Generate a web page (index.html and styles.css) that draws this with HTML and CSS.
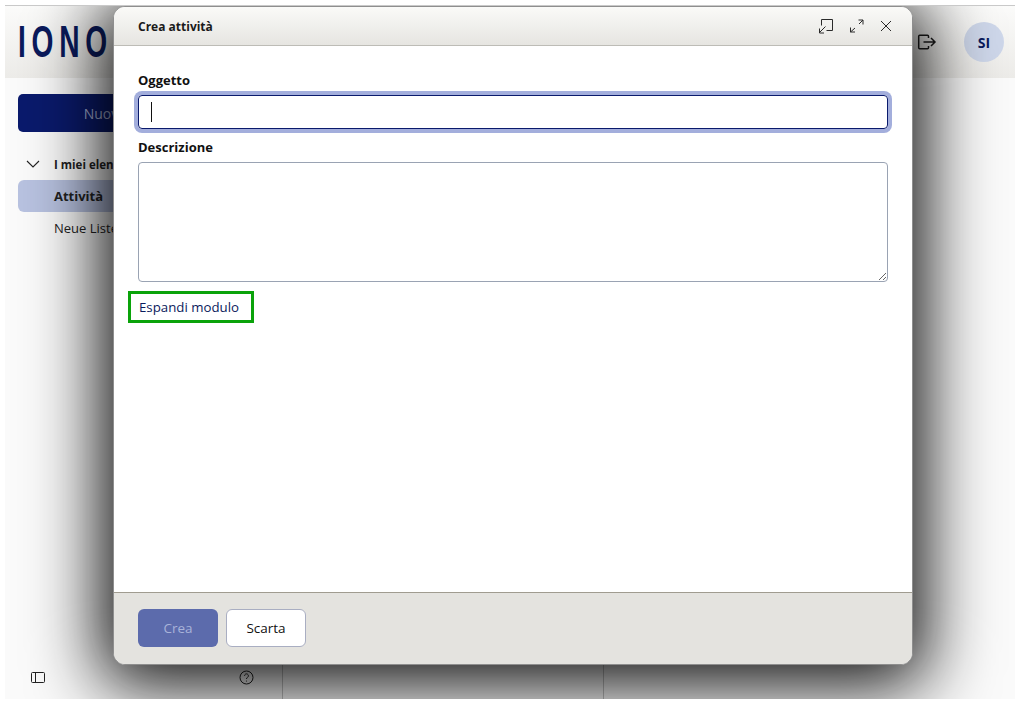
FILE: index.html
```html
<!DOCTYPE html>
<html lang="it">
<head>
<meta charset="utf-8">
<title>Crea attività</title>
<link rel="stylesheet" href="styles.css">
</head>
<body>
<div class="app">
  <header class="topbar">
    <div class="logo"><span class="logo-text">IONO</span></div>
    <div class="top-actions">
      <svg class="icon-logout" width="20" height="20" viewBox="0 0 20 20" fill="none" stroke="#1c1c1c" stroke-width="1.500"><path d="M11.500 6V4.200a1 1 0 0 0-1-1H2.700a1 1 0 0 0-1 1v11.600a1 1 0 0 0 1 1h7.800a1 1 0 0 0 1-1V14"/><path d="M6.500 10h11.500M14 6l4 4-4 4"/></svg>
      <div class="avatar">SI</div>
    </div>
  </header>
  <div class="workspace">
    <aside class="sidebar">
      <div class="side-top">
        <button class="new-btn">Nuova attività</button>
        <div class="group"><svg class="chev" width="14" height="8" viewBox="0 0 14 8" fill="none" stroke="#222" stroke-width="1.100"><path d="M1 1l6 6 6-6"/></svg><span>I miei elenchi</span></div>
        <div class="item item-on">Attività</div>
        <div class="item">Neue Liste</div>
      </div>
      <div class="side-foot">
        <svg width="16" height="13" viewBox="0 0 16 13" fill="none" stroke="#222" stroke-width="1"><rect x="1.500" y="1.500" width="13" height="10" rx="1"/><path d="M5.500 1.500v10"/></svg>
        <svg width="15" height="15" viewBox="0 0 15 15" fill="none" stroke="#222" stroke-width="1"><circle cx="7.500" cy="7.500" r="6.500"/><path d="M5.600 5.800a1.900 1.900 0 1 1 2.900 1.600c-.7.400-1 .8-1 1.600"/><circle cx="7.500" cy="11" r=".6" fill="#222" stroke="none"/></svg>
      </div>
    </aside>
    <section class="list-col"></section>
    <section class="detail-col"></section>
  </div>

  <div class="modal">
    <div class="modal-head">
      <h1 class="modal-title">Crea attività</h1>
      <div class="modal-tools">
        <svg width="16" height="16" viewBox="0 0 16 16" fill="none" stroke="#2a2a2a" stroke-width="1"><path d="M3.500 7.500V1.500h11v11h-6"/><path d="M1 15l6.500-6.500M1.500 10.500V15H6"/></svg>
        <svg width="16" height="16" viewBox="0 0 16 16" fill="none" stroke="#2a2a2a" stroke-width="1"><path d="M9.500 2h4.500v4.500M14 2L10 6M6 14H1.500V9.500M1.500 14L6 10"/></svg>
        <svg width="12" height="12" viewBox="0 0 12 12" fill="none" stroke="#2a2a2a" stroke-width="1"><path d="M1 1l10 10M11 1L1 11"/></svg>
      </div>
    </div>
    <div class="modal-body">
      <label class="field-label first">Oggetto</label>
      <div class="input-focus"><span class="caret"></span></div>
      <label class="field-label second">Descrizione</label>
      <textarea class="area"></textarea>
      <a class="expand">Espandi modulo</a>
    </div>
    <div class="modal-foot">
      <button class="btn btn-primary">Crea</button>
      <button class="btn btn-plain">Scarta</button>
    </div>
  </div>
</div>
</body>
</html>
```
FILE: styles.css
```css
html, body {
  margin: 0;
  height: 100%;
  overflow: hidden;
  background: #fff;
  font-family: "Open Sans", "Noto Sans", sans-serif;
  color: #111;
}
body {
  padding: 5px 0 7px 5px;
  box-sizing: border-box;
}
.app {
  position: relative;
  height: 100%;
  overflow: hidden;
  background: #fafafa;
  border-top: 1px solid #c9c9c9;
  box-sizing: border-box;
  display: flex;
  flex-direction: column;
}
.topbar {
  height: 72px;
  flex: none;
  background: linear-gradient(#fbfbfa, #ecebe8);
  display: flex;
  justify-content: space-between;
  align-items: center;
}
.logo {
  padding-left: 13px;
}
.logo-text {
  display: block;
  font-family: "Liberation Sans", sans-serif;
  font-weight: 700;
  font-size: 44px;
  letter-spacing: 9px;
  color: #0a1a5c;
  transform: scaleX(.64);
  transform-origin: left center;
  line-height: 44px;
}
.top-actions {
  display: flex;
  align-items: center;
  gap: 27px;
  padding-right: 11px;
}
.avatar {
  width: 40px;
  height: 40px;
  border-radius: 50%;
  background: #ced7ea;
  color: #0a1a5c;
  font-weight: 700;
  font-size: 14px;
  display: flex;
  align-items: center;
  justify-content: center;
}
.workspace {
  flex: 1;
  display: flex;
  min-height: 0;
}
.sidebar {
  width: 278px;
  box-sizing: border-box;
  border-right: 1px solid #c4c4c4;
  padding: 16px 13px 0;
  display: flex;
  flex-direction: column;
  justify-content: space-between;
}
.new-btn {
  width: 222px;
  height: 38px;
  border: 0;
  border-radius: 5px;
  background: #0a1a6c;
  color: #a9b3d9;
  font: 14px "Open Sans", sans-serif;
  display: block;
}
.group {
  display: flex;
  align-items: center;
  gap: 14px;
  margin: 24px 0 8px;
  padding-left: 8px;
  height: 16px;
  font-size: 11.500px;
  font-weight: 700;
  color: #222;
}
.item {
  height: 32px;
  display: flex;
  align-items: center;
  padding-left: 36px;
  font-size: 13px;
  border-radius: 6px;
  color: #222;
}
.item-on {
  background: #b8c2e0;
  font-weight: 700;
}
.side-foot {
  display: flex;
  justify-content: space-between;
  align-items: center;
  height: 43px;
  padding: 0 15px 0 12px;
}
.list-col {
  width: 321px;
  box-sizing: border-box;
  border-right: 1px solid #c4c4c4;
}
.detail-col { flex: 1; }

.modal {
  position: absolute;
  left: 108px;
  top: 0;
  width: 800px;
  height: 659px;
  box-sizing: border-box;
  display: flex;
  flex-direction: column;
  background: #fff;
  border: 1px solid #8e8e8e;
  border-radius: 12px;
  box-shadow: 0 8px 70px 12px rgba(0, 0, 0, .95);
}
.modal-head {
  height: 39px;
  flex: none;
  box-sizing: border-box;
  border-bottom: 1px solid #bdbcb6;
  border-radius: 11px 11px 0 0;
  background: linear-gradient(#fafaf8, #e6e5e1);
  display: flex;
  align-items: center;
  justify-content: space-between;
  padding: 0 20px 0 24px;
}
.modal-title {
  margin: 0;
  font-size: 12px;
  font-weight: 700;
  color: #1a1a1a;
}
.modal-tools {
  display: flex;
  align-items: center;
  gap: 15px;
}
.modal-body {
  flex: 1;
  padding: 0 24px;
  display: flex;
  flex-direction: column;
  align-items: flex-start;
}
.field-label {
  font-size: 13px;
  font-weight: 700;
  line-height: 18px;
}
.field-label.first { margin-top: 25px; }
.field-label.second { margin-top: 9px; margin-bottom: 6px; }
.input-focus {
  margin-top: 6px;
  width: 750px;
  height: 34px;
  box-sizing: border-box;
  border: 1.500px solid #0a1a6c;
  border-radius: 4px;
  box-shadow: 0 0 0 4px #a3aedc;
  display: flex;
  align-items: center;
  padding-left: 12px;
}
.caret {
  width: 1px;
  height: 20px;
  background: #111;
}
.area {
  width: 750px;
  height: 120px;
  box-sizing: border-box;
  border: 1px solid #9aa3b3;
  border-radius: 4px;
  padding: 0;
  margin: 0;
  background: #fff;
  display: block;
}
.expand {
  margin: 9px 0 0 -10px;
  box-sizing: border-box;
  height: 32px;
  width: 126px;
  border: 3px solid #0aa30a;
  font-size: 13.250px;
  color: #0a1a5c;
  display: flex;
  align-items: center;
  padding-left: 8px;
}
.modal-foot {
  height: 72px;
  flex: none;
  box-sizing: border-box;
  border-top: 1px solid #a09c90;
  border-radius: 0 0 11px 11px;
  background: #e4e3df;
  display: flex;
  align-items: flex-start;
  gap: 8px;
  padding: 16px 24px 0;
}
.btn {
  width: 80px;
  height: 38px;
  border-radius: 6px;
  font: 13.500px "Open Sans", sans-serif;
  box-sizing: border-box;
}
.btn-primary {
  background: #5c6bac;
  border: 0;
  color: #a9b3d9;
}
.btn-plain {
  background: #fff;
  border: 1px solid #a9aec2;
  color: #111;
}
```
